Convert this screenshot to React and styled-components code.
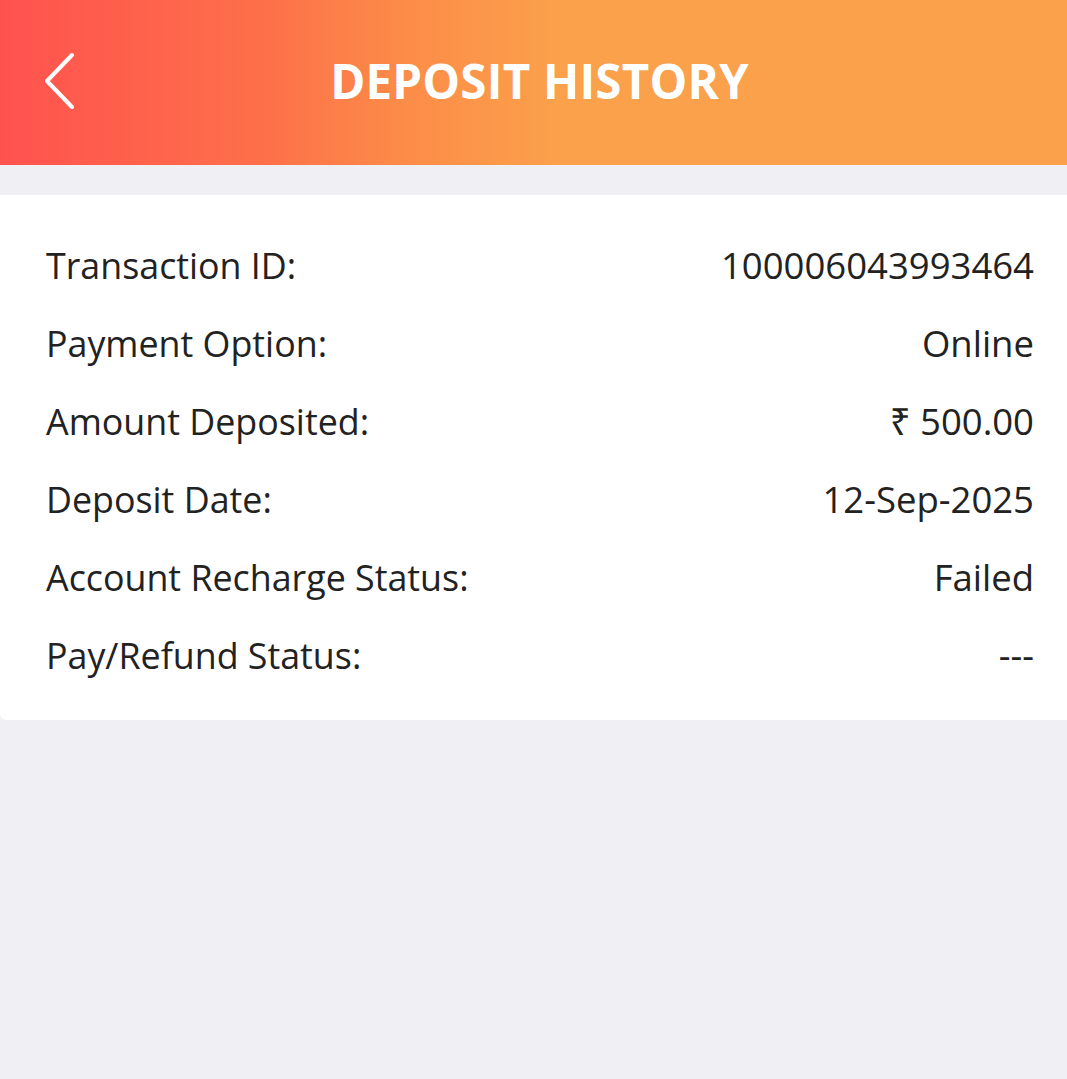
import styled, { createGlobalStyle } from 'styled-components';

const GlobalStyle = createGlobalStyle`
  html, body {
    margin: 0;
    padding: 0;
    background: #efeff4;
    font-family: "Open Sans", "Noto Sans", sans-serif;
  }
`;

const rows = [
  { label: 'Transaction ID:', value: '100006043993464' },
  { label: 'Payment Option:', value: 'Online' },
  { label: 'Amount Deposited:', value: '₹ 500.00' },
  { label: 'Deposit Date:', value: '12-Sep-2025' },
  { label: 'Account Recharge Status:', value: 'Failed' },
  { label: 'Pay/Refund Status:', value: '---' },
];

export default function App() {
  return (
    <>
      <GlobalStyle />
      <Page>
        <Header>
          <BackButton aria-label="Back">
            <svg width="34" height="58" viewBox="0 0 34 58" fill="none">
              <path
                d="M30 3 L5 29 L30 55"
                stroke="#fff"
                strokeWidth="4"
                strokeLinecap="round"
                strokeLinejoin="round"
              />
            </svg>
          </BackButton>
          <Title>DEPOSIT HISTORY</Title>
        </Header>
        <Card>
          {rows.map((row) => (
            <Row key={row.label}>
              <Label>{row.label}</Label>
              <Value>{row.value}</Value>
            </Row>
          ))}
        </Card>
      </Page>
    </>
  );
}

const Page = styled.div`
  min-height: 1079px;
  background: #efeff4;
`;

const Header = styled.header`
  position: relative;
  height: 165px;
  display: flex;
  align-items: center;
  justify-content: center;
  background: linear-gradient(90deg, #ff524f 0%, #fd7049 25%, #fc8c48 38%, #fba04b 52%, #fba04b 100%);
`;

const BackButton = styled.button`
  position: absolute;
  left: 42px;
  top: 52px;
  padding: 0;
  border: none;
  background: none;
  display: flex;
  cursor: pointer;
`;

const Title = styled.h1`
  margin: 0 0 4px;
  padding-left: 12px;
  color: #fff;
  font-size: 47.5px;
  font-weight: 700;
  letter-spacing: 0.2px;
`;

const Card = styled.section`
  margin-top: 30px;
  background: #fff;
  border-radius: 0 0 0 6px;
  padding: 31px 33px 26px 46px;
  display: flex;
  flex-direction: column;
`;

const Row = styled.div`
  height: 78px;
  display: flex;
  align-items: center;
  justify-content: space-between;
  color: #222;
`;

const Label = styled.span`
  font-size: 35.8px;
`;

const Value = styled.span`
  font-size: 36.5px;
  text-align: right;
`;
